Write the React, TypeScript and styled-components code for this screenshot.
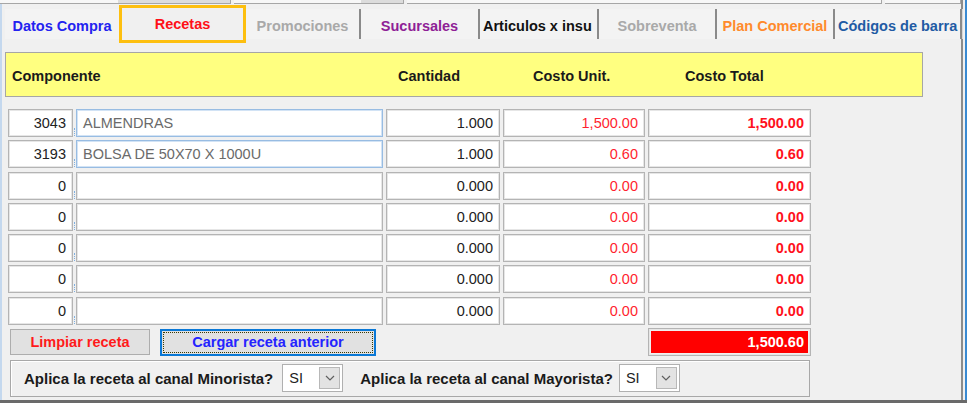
import * as React from "react";
import styled, { createGlobalStyle } from "styled-components";

const GlobalStyle = createGlobalStyle`
  body {
    margin: 0;
    font-family: "Liberation Sans", Arial, sans-serif;
    background: #f0f0f0;
  }
`;

const Frame = styled.div`
  width: 967px;
  height: 403px;
  box-sizing: border-box;
  display: flex;
  overflow: hidden;
  background: #f0f0f0;
  border-bottom: 3px solid #6a6a6a;
`;

const Content = styled.div`
  width: 963px;
  flex: none;
  box-sizing: border-box;
  border-left: 2px solid #c4d8ee;
  border-right: 2px solid #8c8c8c;
  display: flex;
  flex-direction: column;
`;

const EdgeGap = styled.div`
  width: 2px;
  flex: none;
`;

const EdgeBlue = styled.div`
  width: 2px;
  flex: none;
  background: #3a8ad2;
`;

const TopStrip = styled.div`
  height: 4px;
  display: flex;
  gap: 3px;
  margin-left: -2px;
`;

const StripBox = styled.div<{ $w: number }>`
  width: ${(p) => p.$w}px;
  box-sizing: border-box;
  height: 4px;
  background: #f7f7f7;
  border-bottom: 1px solid #a6a6a6;
  border-right: 1px solid #a6a6a6;
  display: flex;
  justify-content: flex-end;
`;

const StripButton = styled.div<{ $w: number }>`
  width: ${(p) => p.$w}px;
  background: #dcdcdc;
`;

const TabBar = styled.div`
  height: 38px;
  margin-top: 1px;
  padding-left: 3px;
  display: flex;
  align-items: center;
`;

const Tab = styled.div<{ $w: number; $color: string; $left?: boolean }>`
  width: ${(p) => p.$w}px;
  flex: none;
  height: 30px;
  box-sizing: border-box;
  display: flex;
  align-items: center;
  justify-content: ${(p) => (p.$left ? "flex-start" : "center")};
  padding: 3px 0 0 ${(p) => (p.$left ? "3px" : "0")};
  overflow: hidden;
  white-space: nowrap;
  font-size: 14.5px;
  font-weight: bold;
  color: ${(p) => p.$color};
  background: #f3f3f3;
`;

const ActiveTab = styled(Tab)`
  height: 38px;
  border: 3px solid #fdbf0f;
  padding: 0;
  background: #f0f0f0;
`;

const TabSep = styled.div`
  width: 2px;
  height: 30px;
  flex: none;
  background: #8a8a8a;
  box-shadow: 1px 0 0 #d8d8d8;
`;

const Header = styled.div`
  margin: 9px 0 0 3px;
  width: 918px;
  height: 45px;
  box-sizing: border-box;
  border: 1px solid #a6a6a6;
  background: #ffff80;
  display: flex;
  align-items: center;
  padding: 2px 0 0 6px;
`;

const HeaderCell = styled.div<{ $w: number }>`
  width: ${(p) => p.$w}px;
  flex: none;
  font-size: 14.5px;
  font-weight: bold;
  color: #1a1a1a;
`;

const Rows = styled.div`
  margin: 12px 0 0 6px;
  display: flex;
  flex-direction: column;
  gap: 3.3px;
`;

const Row = styled.div`
  display: flex;
  height: 28px;
`;

const Field = styled.div<{
  $w: number;
  $align?: "left" | "right";
  $color?: string;
  $bold?: boolean;
  $focus?: boolean;
}>`
  width: ${(p) => p.$w}px;
  flex: none;
  box-sizing: border-box;
  height: 100%;
  background: #fff;
  border: 1px solid ${(p) => (p.$focus ? "#98bce2" : "#b4b4b4")};
  box-shadow: inset 0 0 0 1px ${(p) => (p.$focus ? "#d2e3f5" : "#e6e6e6")};
  display: flex;
  align-items: center;
  justify-content: ${(p) => (p.$align === "left" ? "flex-start" : "flex-end")};
  padding: 0 6px;
  font-size: 14.5px;
  font-weight: ${(p) => (p.$bold ? "bold" : "normal")};
  color: ${(p) => p.$color || "#222"};
  white-space: nowrap;
  overflow: hidden;
`;

const Joiner = styled.div`
  width: 3px;
  flex: none;
  display: flex;
  align-items: flex-end;
  justify-content: center;
  padding-bottom: 1px;
  box-sizing: border-box;
`;

const JoinDots = styled.div`
  width: 0;
  height: 8px;
  border-left: 1px dotted #7fb0e0;
`;

const ColGap = styled.div`
  width: 3px;
  flex: none;
`;

const ActionRow = styled.div`
  margin: 3px 0 0 6px;
  width: 803px;
  height: 29px;
  display: flex;
  align-items: center;
`;

const Button = styled.button<{ $w: number; $color: string }>`
  width: ${(p) => p.$w}px;
  height: 26px;
  box-sizing: border-box;
  margin: 0 0 0 2px;
  padding: 0;
  background: #e1e1e1;
  border: 1px solid #adadad;
  font-family: "Liberation Sans", Arial, sans-serif;
  font-size: 14.5px;
  font-weight: bold;
  color: ${(p) => p.$color};
`;

const FocusButton = styled(Button)`
  height: 27px;
  margin-left: 10px;
  border: 2px solid #0a78d6;
  padding: 1px;
`;

const FocusInner = styled.span`
  display: flex;
  align-items: center;
  justify-content: center;
  height: 100%;
  box-sizing: border-box;
  border: 1px dotted #3a3a00;
`;

const TotalBox = styled.div`
  margin-left: auto;
  width: 163px;
  height: 28px;
  box-sizing: border-box;
  border: 1px solid #b4b4b4;
  box-shadow: inset 0 0 0 1px #e6e6e6;
  background: #ff0000;
  background-clip: content-box;
  padding: 2px;
  display: flex;
  align-items: center;
  justify-content: flex-end;
  font-size: 14.5px;
  font-weight: bold;
  color: #fff;
`;

const TotalText = styled.span`
  padding-right: 4px;
`;

const ChannelPanel = styled.div`
  margin: 3px 0 0 8px;
  width: 800px;
  height: 37px;
  box-sizing: border-box;
  border: 1px solid #a8a8a8;
  box-shadow: inset 1px 1px 0 #fff;
  display: flex;
  align-items: center;
  padding-left: 13px;
`;

const ChannelLabel = styled.span<{ $gap?: number }>`
  font-size: 15px;
  font-weight: bold;
  color: #1a1a1a;
  margin-left: ${(p) => p.$gap || 0}px;
`;

const Select = styled.div<{ $gap: number }>`
  margin-left: ${(p) => p.$gap}px;
  width: 61px;
  height: 28px;
  box-sizing: border-box;
  background: #fff;
  border: 1px solid #b0b0b0;
  display: flex;
  align-items: center;
  padding: 2px;
`;

const SelectValue = styled.span`
  flex: 1;
  padding-left: 4px;
  font-size: 14.5px;
  color: #222;
`;

const SelectArrow = styled.span`
  width: 21px;
  height: 100%;
  box-sizing: border-box;
  background: #e3e3e3;
  border: 1px solid #b8b8b8;
  display: flex;
  align-items: center;
  justify-content: center;
`;

const tabs = [
  { label: "Promociones", color: "#a9a9a9", w: 113 },
  { label: "Sucursales", color: "#8e2196", w: 117 },
  { label: "Articulos x insu", color: "#111", w: 117, left: true },
  { label: "Sobreventa", color: "#a9a9a9", w: 116 },
  { label: "Plan Comercial", color: "#ff8a2c", w: 116 },
  { label: "Códigos de barra", color: "#1f5ba4", w: 125, left: true },
];

const rows = [
  { code: "3043", name: "ALMENDRAS", qty: "1.000", unit: "1,500.00", total: "1,500.00", focus: true },
  { code: "3193", name: "BOLSA DE 50X70 X 1000U", qty: "1.000", unit: "0.60", total: "0.60", focus: true },
  { code: "0", name: "", qty: "0.000", unit: "0.00", total: "0.00" },
  { code: "0", name: "", qty: "0.000", unit: "0.00", total: "0.00" },
  { code: "0", name: "", qty: "0.000", unit: "0.00", total: "0.00" },
  { code: "0", name: "", qty: "0.000", unit: "0.00", total: "0.00" },
  { code: "0", name: "", qty: "0.000", unit: "0.00", total: "0.00" },
];

const Chevron: React.FC = () => (
  <svg width="10" height="6" viewBox="0 0 10 6">
    <path d="M1 1 L5 5 L9 1" fill="none" stroke="#606060" strokeWidth="1.2" />
  </svg>
);

const ChannelSelect: React.FC<{ gap: number }> = ({ gap }) => (
  <Select $gap={gap}>
    <SelectValue>SI</SelectValue>
    <SelectArrow>
      <Chevron />
    </SelectArrow>
  </Select>
);

const App: React.FC = () => {
  return (
    <Frame>
      <GlobalStyle />
      <Content>
        <TopStrip>
          <StripBox $w={232}>
            <StripButton $w={112} />
          </StripBox>
          <StripBox $w={170}>
            <StripButton $w={42} />
          </StripBox>
          <StripBox $w={477} />
          <StripBox $w={76} />
        </TopStrip>
        <TabBar>
          <Tab $w={114} $color="#2323f0">
            Datos Compra
          </Tab>
          <ActiveTab $w={127} $color="#ff1018">
            Recetas
          </ActiveTab>
          {tabs.map((t) => (
            <React.Fragment key={t.label}>
              <Tab $w={t.w} $color={t.color} $left={t.left}>
                {t.label}
              </Tab>
              <TabSep />
            </React.Fragment>
          ))}
        </TabBar>
        <Header>
          <HeaderCell $w={386}>Componente</HeaderCell>
          <HeaderCell $w={135}>Cantidad</HeaderCell>
          <HeaderCell $w={152}>Costo Unit.</HeaderCell>
          <HeaderCell $w={150}>Costo Total</HeaderCell>
        </Header>
        <Rows>
          {rows.map((r, i) => (
            <Row key={i}>
              <Field $w={65}>{r.code}</Field>
              <Joiner>
                <JoinDots />
              </Joiner>
              <Field $w={307} $align="left" $color="#6a6a6a" $focus={r.focus}>
                {r.name}
              </Field>
              <ColGap />
              <Field $w={114}>{r.qty}</Field>
              <ColGap />
              <Field $w={142} $color="#ff1f2f">
                {r.unit}
              </Field>
              <ColGap />
              <Field $w={163} $color="#ff1020" $bold>
                {r.total}
              </Field>
            </Row>
          ))}
        </Rows>
        <ActionRow>
          <Button $w={140} $color="#ff1a1a">
            Limpiar receta
          </Button>
          <FocusButton $w={216} $color="#2424ff">
            <FocusInner>Cargar receta anterior</FocusInner>
          </FocusButton>
          <TotalBox>
            <TotalText>1,500.60</TotalText>
          </TotalBox>
        </ActionRow>
        <ChannelPanel>
          <ChannelLabel>Aplica la receta al canal Minorista?</ChannelLabel>
          <ChannelSelect gap={9} />
          <ChannelLabel $gap={17}>Aplica la receta al canal Mayorista?</ChannelLabel>
          <ChannelSelect gap={6} />
        </ChannelPanel>
      </Content>
      <EdgeGap />
      <EdgeBlue />
    </Frame>
  );
};

export default App;
